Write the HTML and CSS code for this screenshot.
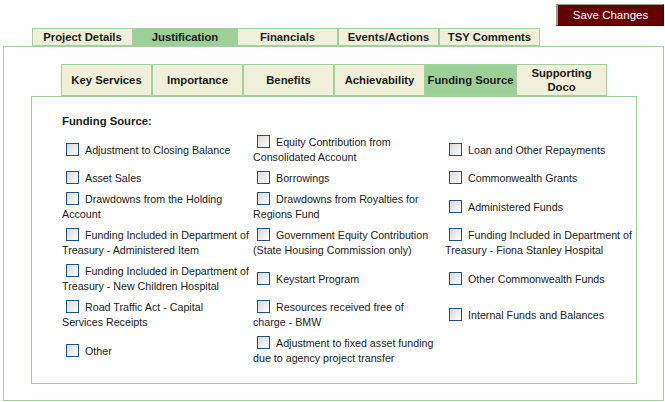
FILE: index.html
```html
<!DOCTYPE html>
<html lang="en">

  <head>
    <meta charset="UTF-8">
    <meta name="viewport" content="width=device-width, initial-scale=1.0">
    <title>Justification - Funding Source</title>
    <link rel="stylesheet" href="styles.css">
  </head>

  <body>
    <div class="header">
      <button class="save">Save Changes</button>
    </div>

    <div class="page">
      <div class="tabs">
        <div class="tab">Project Details</div>
        <div class="tab tab-wide active">Justification</div>
        <div class="tab">Financials</div>
        <div class="tab">Events/Actions</div>
        <div class="tab">TSY Comments</div>
      </div>

      <div class="panel">
        <div class="sub-tabs">
          <div class="sub-tab">Key Services</div>
          <div class="sub-tab">Importance</div>
          <div class="sub-tab">Benefits</div>
          <div class="sub-tab">Achievability</div>
          <div class="sub-tab active">Funding Source</div>
          <div class="sub-tab">Supporting Doco</div>
        </div>

        <div class="sub-panel">
          <div class="heading">Funding Source:</div>
          <table class="sources">
            <colgroup>
              <col class="col-a">
              <col class="col-b">
              <col class="col-c">
            </colgroup>
            <tr class="tall">
              <td><span class="check"></span>Adjustment to Closing Balance</td>
              <td><span class="check"></span>Equity Contribution from<br>Consolidated Account</td>
              <td><span class="check"></span>Loan and Other Repayments</td>
            </tr>
            <tr>
              <td><span class="check"></span>Asset Sales</td>
              <td><span class="check"></span>Borrowings</td>
              <td><span class="check"></span>Commonwealth Grants</td>
            </tr>
            <tr class="tall">
              <td><span class="check"></span>Drawdowns from the Holding<br>Account</td>
              <td><span class="check"></span>Drawdowns from Royalties for<br>Regions Fund</td>
              <td><span class="check"></span>Administered Funds</td>
            </tr>
            <tr class="tall">
              <td><span class="check"></span>Funding Included in Department of<br>Treasury - Administered Item</td>
              <td><span class="check"></span>Government Equity Contribution<br>(State Housing Commission only)</td>
              <td><span class="check"></span>Funding Included in Department of<br>Treasury - Fiona Stanley Hospital</td>
            </tr>
            <tr class="tall">
              <td><span class="check"></span>Funding Included in Department of<br>Treasury - New Children Hospital</td>
              <td><span class="check"></span>Keystart Program</td>
              <td><span class="check"></span>Other Commonwealth Funds</td>
            </tr>
            <tr class="tall">
              <td><span class="check"></span>Road Traffic Act - Capital<br>Services Receipts</td>
              <td><span class="check"></span>Resources received free of<br>charge - BMW</td>
              <td><span class="check"></span>Internal Funds and Balances</td>
            </tr>
            <tr class="tall">
              <td><span class="check"></span>Other</td>
              <td><span class="check"></span>Adjustment to fixed asset funding<br>due to agency project transfer</td>
              <td></td>
            </tr>
          </table>
        </div>
      </div>
    </div>
  </body>

</html>
```

FILE: styles.css
```css
:root {
  --line: #a2d09d;
  --tab-bg: #f0efd8;
  --tab-active: #9dcf98;
  --text: #1a1a1a;
}

body {
  margin: 0;
  font-family: "Liberation Sans", Arial, sans-serif;
  font-size: 11px;
  color: var(--text);
  background: #ffffff;
}

.header {
  height: 28px;
  display: flex;
  justify-content: flex-end;
  align-items: flex-start;
  padding-right: 1px;
  box-sizing: border-box;
}

.save {
  margin-top: 4px;
  width: 108px;
  height: 22px;
  padding: 0;
  background-color: #650000;
  color: #ffffff;
  font-family: "Liberation Sans", Arial, sans-serif;
  font-size: 11.5px;
  border: 1px solid #3a0000;
  border-left: 2px solid #9a9a9a;
  border-top: 1px solid #9a9a9a;
  cursor: pointer;
}

.page {
  margin: 0 1px 0 3px;
}

.tabs {
  display: flex;
  padding-left: 29px;
}

.tab {
  width: 99px;
  height: 16px;
  line-height: 16px;
  text-align: center;
  font-weight: bold;
  font-size: 11.3px;
  background-color: var(--tab-bg);
  border: 1px solid var(--line);
}

.tab-wide {
  width: 102px;
}

.tab.active,
.sub-tab.active {
  background-color: var(--tab-active);
}

.panel {
  height: 355px;
  box-sizing: border-box;
  border: 1px solid var(--line);
  padding: 17px 26px 16px 27px;
}

.sub-tabs {
  display: flex;
  padding-left: 30px;
}

.sub-tab {
  width: 89px;
  height: 30px;
  display: flex;
  align-items: center;
  justify-content: center;
  text-align: center;
  line-height: 14px;
  font-weight: bold;
  font-size: 11.3px;
  background-color: var(--tab-bg);
  border: 1px solid var(--line);
}

.sub-panel {
  height: 288px;
  box-sizing: border-box;
  border: 1px solid var(--line);
  padding: 17px 0 14px 30px;
}

.heading {
  font-weight: bold;
  font-size: 11.3px;
  line-height: 15px;
  margin-bottom: 3px;
}

.sources {
  border-collapse: collapse;
  table-layout: fixed;
  width: 574px;
}

.col-a {
  width: 191px;
}

.col-b {
  width: 192px;
}

.col-c {
  width: 191px;
}

.sources td {
  padding: 3px 0;
  height: 15px;
  font-size: 10.7px;
  line-height: 15px;
  vertical-align: middle;
  white-space: nowrap;
}

.sources tr.tall td {
  height: 30px;
}

.check {
  display: inline-block;
  width: 11px;
  height: 11px;
  margin: 0 6px 0 4px;
  vertical-align: -2px;
  border: 1px solid #1c5180;
  background: linear-gradient(135deg, #d8d8d8, #ffffff);
}
```
